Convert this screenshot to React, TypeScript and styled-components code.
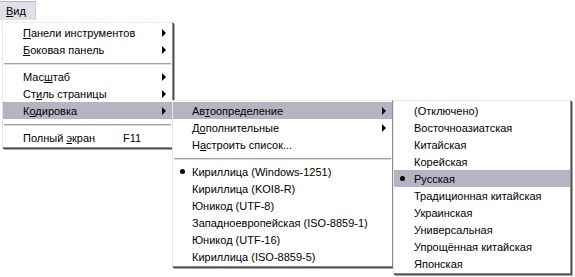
import React from "react";
import styled, { createGlobalStyle } from "styled-components";

const GlobalStyle = createGlobalStyle`
  html, body { margin: 0; padding: 0; background: #ffffff; }
  body { font-family: "Liberation Sans", Arial, sans-serif; font-size: 11px; color: #000; }
`;

const Canvas = styled.div`
  position: relative;
  width: 575px;
  height: 277px;
  overflow: hidden;
  background: #ffffff;
`;

const MenuBar = styled.div`
  display: flex;
  height: 21px;
`;

const MenuTitle = styled.div<{ $active?: boolean }>`
  display: flex;
  align-items: center;
  padding: 0 9px 0 6px;
  height: 18px;
  margin-top: 1px;
  background: ${(p) => (p.$active ? "#e2dfe9" : "transparent")};
  border-top: 1px solid #b8b5c2;
  border-right: 1px solid #cfccd8;
`;

const Popup = styled.div<{ $left: number; $top: number; $width: number }>`
  position: absolute;
  left: ${(p) => p.$left}px;
  top: ${(p) => p.$top}px;
  width: ${(p) => p.$width}px;
  box-sizing: border-box;
  background: #ffffff;
  border: 1px solid #ece6e6;
  border-top-color: #f3e6da;
  border-right-color: #8a8a8a;
  border-bottom-color: #8a8a8a;
  box-shadow: 1px 1px 0 #505050, 2px 2px 0 #a8a8a8;
  padding: 1px 0;
  display: flex;
  flex-direction: column;
`;

const Item = styled.div<{ $hot?: boolean }>`
  display: flex;
  align-items: center;
  height: 17px;
  padding-right: 6px;
  background: ${(p) => (p.$hot ? "#b6b4c3" : "transparent")};
  white-space: nowrap;
`;

const CheckSlot = styled.span<{ $w: number }>`
  flex: 0 0 ${(p) => p.$w}px;
  display: flex;
  justify-content: center;
  align-items: center;
`;

const Bullet = styled.span`
  width: 5px;
  height: 5px;
  border-radius: 50%;
  background: #000;
`;

const Label = styled.span<{ $w?: number; $indent: number }>`
  flex: ${(p) => (p.$w ? `0 0 ${p.$w}px` : "1")};
  padding-left: ${(p) => p.$indent}px;
`;

const Shortcut = styled.span`
  flex: 1;
`;

const Arrow = styled.span`
  width: 0;
  height: 0;
  border-top: 4px solid transparent;
  border-bottom: 4px solid transparent;
  border-left: 4px solid #000;
`;

const Separator = styled.div`
  height: 10px;
  display: flex;
  align-items: center;
  &::after {
    content: "";
    flex: 1;
    height: 1px;
    margin: 0 1px;
    background: #a0a0a0;
    box-shadow: 0 1px 0 #dcdcdc;
  }
`;

const U = styled.span`
  text-decoration: underline;
  text-underline-offset: 1px;
`;

type Entry =
  | { sep: true }
  | {
      sep?: false;
      pre?: string;
      u?: string;
      post?: string;
      sub?: boolean;
      hot?: boolean;
      bullet?: boolean;
      key?: string;
    };

const renderEntries = (entries: Entry[], slot: number, indent: number) =>
  entries.map((e, i) =>
    e.sep ? (
      <Separator key={i} />
    ) : (
      <Item key={i} $hot={e.hot}>
        <CheckSlot $w={slot}>{e.bullet && <Bullet />}</CheckSlot>
        <Label $w={e.key ? 100 : undefined} $indent={indent}>
          {e.pre}
          {e.u && <U>{e.u}</U>}
          {e.post}
        </Label>
        {e.key && <Shortcut>{e.key}</Shortcut>}
        {e.sub && <Arrow />}
      </Item>
    )
  );

const viewMenu: Entry[] = [
  { u: "П", post: "анели инструментов", sub: true },
  { u: "Б", post: "оковая панель", sub: true },
  { sep: true },
  { pre: "Мас", u: "ш", post: "таб", sub: true },
  { pre: "Ст", u: "и", post: "ль страницы", sub: true },
  { pre: "К", u: "о", post: "дировка", sub: true, hot: true },
  { sep: true },
  { pre: "Полный ", u: "э", post: "кран", key: "F11" },
];

const encodingMenu: Entry[] = [
  { pre: "Ав", u: "т", post: "оопределение", sub: true, hot: true },
  { pre: "Д", u: "о", post: "полнительные", sub: true },
  { pre: "Н", u: "а", post: "строить список..." },
  { sep: true },
  { pre: "Кириллица (Windows-1251)", bullet: true },
  { pre: "Кириллица (KOI8-R)" },
  { pre: "Юникод (UTF-8)" },
  { pre: "Западноевропейская (ISO-8859-1)" },
  { pre: "Юникод (UTF-16)" },
  { pre: "Кириллица (ISO-8859-5)" },
];

const autoMenu: Entry[] = [
  { pre: "(Отключено)" },
  { pre: "Восточноазиатская" },
  { pre: "Китайская" },
  { pre: "Корейская" },
  { pre: "Русская", hot: true, bullet: true },
  { pre: "Традиционная китайская" },
  { pre: "Украинская" },
  { pre: "Универсальная" },
  { pre: "Упрощённая китайская" },
  { pre: "Японская" },
];

export default function App() {
  return (
    <>
      <GlobalStyle />
      <Canvas>
        <MenuBar>
          <MenuTitle $active>
            <U>В</U>ид
          </MenuTitle>
        </MenuBar>
        <Popup $left={2} $top={22} $width={171}>
          {renderEntries(viewMenu, 20, 0)}
        </Popup>
        <Popup $left={172} $top={100} $width={221}>
          {renderEntries(encodingMenu, 19, 0)}
        </Popup>
        <Popup $left={393} $top={100} $width={178}>
          {renderEntries(autoMenu, 17, 3)}
        </Popup>
      </Canvas>
    </>
  );
}
